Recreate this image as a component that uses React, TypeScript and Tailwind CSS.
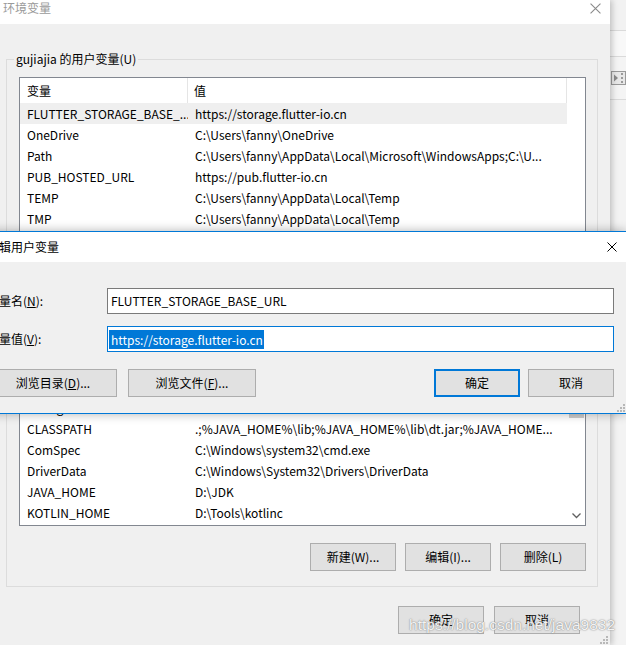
const userVars: [string, string][] = [
  ["FLUTTER_STORAGE_BASE_...", "https://storage.flutter-io.cn"],
  ["OneDrive", "C:\\Users\\fanny\\OneDrive"],
  ["Path", "C:\\Users\\fanny\\AppData\\Local\\Microsoft\\WindowsApps;C:\\U..."],
  ["PUB_HOSTED_URL", "https://pub.flutter-io.cn"],
  ["TEMP", "C:\\Users\\fanny\\AppData\\Local\\Temp"],
  ["TMP", "C:\\Users\\fanny\\AppData\\Local\\Temp"],
];

const systemVars: [string, string][] = [
  ["Config", ""],
  ["CLASSPATH", ".;%JAVA_HOME%\\lib;%JAVA_HOME%\\lib\\dt.jar;%JAVA_HOME..."],
  ["ComSpec", "C:\\Windows\\system32\\cmd.exe"],
  ["DriverData", "C:\\Windows\\System32\\Drivers\\DriverData"],
  ["JAVA_HOME", "D:\\JDK"],
  ["KOTLIN_HOME", "D:\\Tools\\kotlinc"],
];

// rows hidden behind the edit dialog
const hiddenRows: [string, string][] = Array.from({ length: 8 }, () => ["", ""]);

function CloseIcon({ color, size }: { color: string; size: number }) {
  return (
    <svg width={size} height={size} viewBox="0 0 10 10">
      <path d="M0.5 0.5L9.5 9.5M9.5 0.5L0.5 9.5" stroke={color} strokeWidth={1} fill="none" />
    </svg>
  );
}

function Grip() {
  return (
    <svg width="8" height="8" viewBox="0 0 8 8" fill="#b8b8b8">
      <rect x="6" y="0" width="2" height="2" />
      <rect x="3" y="3" width="2" height="2" />
      <rect x="6" y="3" width="2" height="2" />
      <rect x="0" y="6" width="2" height="2" />
      <rect x="3" y="6" width="2" height="2" />
      <rect x="6" y="6" width="2" height="2" />
    </svg>
  );
}

function Btn({ children, primary, className = "" }: { children: React.ReactNode; primary?: boolean; className?: string }) {
  return (
    <button
      className={
        "h-[28px] bg-[#e1e1e1] text-[12px] text-black flex items-center justify-center " +
        (primary ? "border-2 border-[#0078d7] " : "border border-[#adadad] ") +
        className
      }
    >
      {children}
    </button>
  );
}

function VarRow({ name, value, selected }: { name: string; value: string; selected?: boolean }) {
  return (
    <div className={"h-[21px] flex items-center text-[12px] text-black " + (selected ? "bg-[#efefef]" : "")}>
      <div className="w-[168px] pl-[7px] whitespace-nowrap overflow-hidden">{name}</div>
      <div className="flex-1 pl-[7px] whitespace-nowrap overflow-hidden">{value}</div>
    </div>
  );
}

export default function App() {
  return (
    <div className="relative w-[626px] h-[645px] overflow-hidden flex bg-[#f0f0f0] font-['Noto_Sans_CJK_SC','Liberation_Sans',sans-serif]">
      {/* 环境变量 window */}
      <div className="relative z-10 w-[610px] h-full flex flex-col bg-[#f0f0f0] shadow-[2px_0_6px_rgba(0,0,0,0.22)]">
        <div className="h-[24px] bg-white flex items-start justify-between pl-[3px] pr-[9px]">
          <span className="text-[12px] leading-[16px] text-[#9a9a9a]">环境变量</span>
          <div className="mt-[3px]">
            <CloseIcon color="#8a8a8a" size={11} />
          </div>
        </div>

        <div className="flex-1 flex flex-col pt-[35px] pl-[6px] pr-[12px]">
          <div className="relative border border-[#dcdcdc] pt-[17px] pl-[12px] pr-[11px] pb-[15px]">
            <span className="absolute -top-[10px] left-[7px] bg-[#f0f0f0] px-[2px] text-[12px] leading-[18px] text-black">
              gujiajia 的用户变量(U)
            </span>

            <div className="h-[449px] border border-[#828790] bg-white flex">
              <div className="w-[547px] flex flex-col">
                <div className="h-[25px] flex items-center text-[12px] text-black">
                  <div className="w-[168px] h-full pl-[7px] flex items-center border-r border-[#e5e5e5]">变量</div>
                  <div className="flex-1 h-full pl-[6px] flex items-center border-r border-[#e5e5e5]">值</div>
                </div>
                {userVars.map(([n, v], i) => (
                  <VarRow key={"u" + i} name={n} value={v} selected={i === 0} />
                ))}
                {hiddenRows.map(([n, v], i) => (
                  <VarRow key={"h" + i} name={n} value={v} />
                ))}
                {systemVars.map(([n, v], i) => (
                  <VarRow key={"s" + i} name={n} value={v} />
                ))}
              </div>
              <div className="flex-1 flex flex-col items-center">
                <div className="h-[220px]" />
                <div className="w-[15px] h-[120px] bg-[#cdcdcd]" />
                <div className="flex-1" />
                <svg width="9" height="6" viewBox="0 0 9 6" className="mb-[6px]">
                  <path d="M0.5 0.5L4.5 4.5L8.5 0.5" stroke="#606060" strokeWidth={1.3} fill="none" />
                </svg>
              </div>
            </div>

            <div className="mt-[17px] flex justify-end gap-[9px]">
              <Btn className="w-[86px]">新建(W)...</Btn>
              <Btn className="w-[86px]">编辑(I)...</Btn>
              <Btn className="w-[86px]">删除(L)</Btn>
            </div>
          </div>

          <div className="mt-[19px] flex justify-end gap-[10px] pr-[18px]">
            <Btn className="w-[86px]">确定</Btn>
            <Btn className="w-[86px]">取消</Btn>
          </div>
          <div className="flex-1 flex items-end justify-end pb-[1px] -mr-[10px]">
            <Grip />
          </div>
        </div>
      </div>

      {/* window behind, on the right */}
      <div className="flex-1 flex flex-col">
        <div className="h-[31px] bg-[#f2f2f2] border-b border-[#dadada]" />
        <div className="h-[26px] bg-[#f8f8f8] border-b border-[#dadada]" />
        <div className="h-[43px] bg-[#f4f4f4] border-b border-[#dadada] flex items-center pl-[1px]">
          <svg width="15" height="14" viewBox="0 0 15 14">
            <rect x="0.5" y="0.5" width="14" height="13" fill="#e8e8e8" stroke="#9a9a9a" />
            <path d="M3 3.5L7 7L3 10.5Z" fill="#8a8a8a" />
            <rect x="10" y="2" width="2" height="2" fill="#9a9a9a" />
            <rect x="10" y="6" width="2" height="2" fill="#9a9a9a" />
            <rect x="10" y="10" width="2" height="2" fill="#9a9a9a" />
          </svg>
        </div>
        <div className="flex-1 bg-[#f3f3f3]" />
      </div>

      {/* 编辑用户变量 dialog */}
      <div className="absolute z-20 left-[-32px] top-[231px] w-[658px] h-[183px] flex flex-col border-y border-[#0078d7] bg-[#f0f0f0] shadow-[0_0_10px_rgba(0,0,0,0.3)]">
        <div className="h-[30px] bg-white flex items-center justify-between pl-[19px] pr-[9px]">
          <span className="text-[12px] text-black">编辑用户变量</span>
          <CloseIcon color="#000" size={10} />
        </div>
        <div className="flex-1 flex flex-col pt-[26px] pl-[21px] pr-[12px]">
          <div className="flex items-center h-[26px]">
            <label className="w-[118px] -indent-[2px] text-[12px] text-black whitespace-nowrap">
              变量名(<span className="underline">N</span>):
            </label>
            <div className="flex-1 h-full border border-[#7a7a7a] bg-white flex items-center pl-[3px] text-[12px] text-black">
              FLUTTER_STORAGE_BASE_URL
            </div>
          </div>
          <div className="flex items-center h-[26px] mt-[12px]">
            <label className="w-[118px] -indent-[2px] text-[12px] text-black whitespace-nowrap">
              变量值(<span className="underline">V</span>):
            </label>
            <div className="flex-1 h-full border border-[#0078d7] bg-white flex items-center pl-[1px] text-[12px]">
              <span className="bg-[#0078d7] text-white pl-[2px] pr-[1px] leading-[19px]">https://storage.flutter-io.cn</span>
            </div>
          </div>
          <div className="mt-[17px] flex items-center">
            <Btn className="w-[128px]">
              浏览目录(<span className="underline">D</span>)...
            </Btn>
            <Btn className="w-[128px] ml-[11px]">
              浏览文件(<span className="underline">F</span>)...
            </Btn>
            <div className="flex-1" />
            <Btn primary className="w-[86px]">确定</Btn>
            <Btn className="w-[86px] ml-[8px]">取消</Btn>
          </div>
          <div className="flex-1 flex items-end justify-end -mr-[11px] pb-[1px]">
            <Grip />
          </div>
        </div>
      </div>

      {/* watermark */}
      <span className="absolute z-30 right-[11px] bottom-[9px] text-[15.5px] font-['Liberation_Sans',sans-serif] text-white/90 [text-shadow:0_0_1px_#777,0_0_2px_#aaa]">
        https://blog.csdn.net/java9832
      </span>
    </div>
  );
}
